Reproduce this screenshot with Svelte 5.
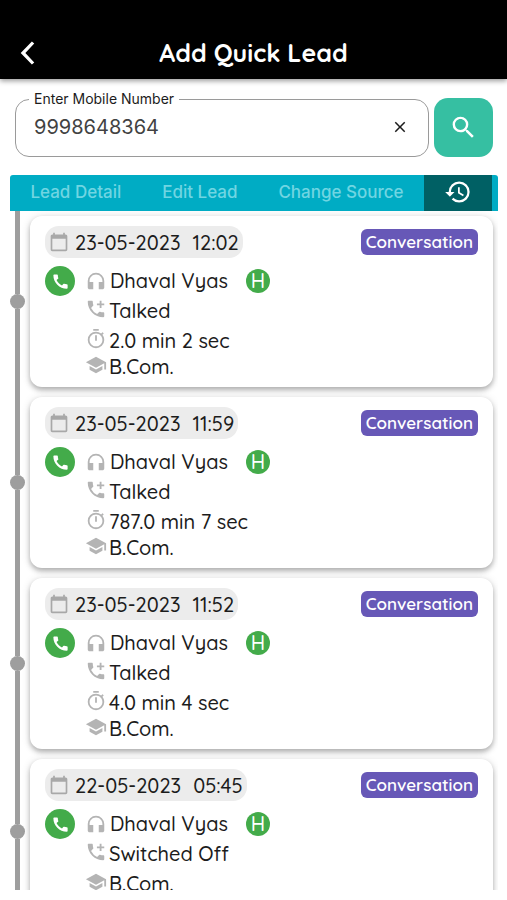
<script lang="ts">
	interface Activity {
		date: string;
		time: string;
		caller: string;
		status: string;
		duration?: string;
		course: string;
		tag: string;
	}

	const tabs = ['Lead Detail', 'Edit Lead', 'Change Source'];

	const activities: Activity[] = [
		{ date: '23-05-2023', time: '12:02', caller: 'Dhaval Vyas', status: 'Talked', duration: '2.0 min 2 sec', course: 'B.Com.', tag: 'Conversation' },
		{ date: '23-05-2023', time: '11:59', caller: 'Dhaval Vyas', status: 'Talked', duration: '787.0 min 7 sec', course: 'B.Com.', tag: 'Conversation' },
		{ date: '23-05-2023', time: '11:52', caller: 'Dhaval Vyas', status: 'Talked', duration: '4.0 min 4 sec', course: 'B.Com.', tag: 'Conversation' },
		{ date: '22-05-2023', time: '05:45', caller: 'Dhaval Vyas', status: 'Switched Off', course: 'B.Com.', tag: 'Conversation' }
	];

	// 24x24 icon outlines
	const icons = {
		search: 'M15.5 14h-.79l-.28-.27A6.47 6.47 0 0 0 16 9.5 6.5 6.5 0 1 0 9.5 16c1.61 0 3.09-.59 4.23-1.57l.27.28v.79l5 4.99L20.49 19l-4.99-5zm-6 0C7.01 14 5 11.99 5 9.5S7.01 5 9.5 5 14 7.01 14 9.5 11.99 14 9.5 14z',
		close: 'M19 6.41L17.59 5 12 10.59 6.41 5 5 6.41 10.59 12 5 17.59 6.41 19 12 13.41 17.59 19 19 17.59 13.41 12z',
		history: 'M13 3a9 9 0 0 0-9 9H1l3.89 3.89.07.14L9 12H6c0-3.87 3.13-7 7-7s7 3.13 7 7-3.13 7-7 7c-1.93 0-3.68-.79-4.94-2.06l-1.42 1.42A8.95 8.95 0 0 0 13 21a9 9 0 0 0 0-18zm-1 5v5l4.28 2.54.72-1.21-3.5-2.08V8H12z',
		calendar: 'M20 3h-1V1h-2v2H7V1H5v2H4c-1.1 0-2 .9-2 2v16c0 1.1.9 2 2 2h16c1.1 0 2-.9 2-2V5c0-1.1-.9-2-2-2zm0 18H4V8h16v13z',
		phone: 'M20.01 15.38c-1.23 0-2.42-.2-3.53-.56a.98.98 0 0 0-1.01.24l-1.57 1.97c-2.83-1.35-5.48-3.9-6.89-6.83l1.95-1.66c.27-.28.35-.67.24-1.02-.37-1.11-.56-2.3-.56-3.53 0-.54-.45-.99-.99-.99H4.19C3.65 3 3 3.24 3 3.99 3 13.28 10.73 21 20.01 21c.71 0 .99-.63.99-1.18v-3.45c0-.54-.45-.99-.99-.99z',
		headphones: 'M12 3a9 9 0 0 0-9 9v7c0 1.1.9 2 2 2h4v-8H5v-1c0-3.87 3.13-7 7-7s7 3.13 7 7v1h-4v8h4c1.1 0 2-.9 2-2v-7a9 9 0 0 0-9-9z',
		addCall: 'M20 15.5c-1.25 0-2.45-.2-3.57-.57-.1-.03-.21-.05-.31-.05-.26 0-.51.1-.71.29l-2.2 2.2a15.05 15.05 0 0 1-6.59-6.59l2.2-2.2c.28-.28.36-.67.25-1.02C8.7 6.45 8.5 5.25 8.5 4c0-.55-.45-1-1-1H4c-.55 0-1 .45-1 1 0 9.39 7.61 17 17 17 .55 0 1-.45 1-1v-3.5c0-.55-.45-1-1-1zM21 6h-3V3h-2v3h-3v2h3v3h2V8h3z',
		timer: 'M15 1H9v2h6V1zm-4 13h2V8h-2v6zm8.03-6.61l1.42-1.42c-.43-.51-.9-.99-1.41-1.41l-1.42 1.42A8.96 8.96 0 0 0 12 4a9 9 0 1 0 9 9c0-2.12-.74-4.07-1.97-5.61zM12 20c-3.87 0-7-3.13-7-7s3.13-7 7-7 7 3.13 7 7-3.13 7-7 7z',
		school: 'M5 13.18v4L12 21l7-3.82v-4L12 17l-7-3.82zM12 3L1 9l11 6 9-4.91V17h2V9L12 3z'
	};

	let mobile = $state('9998648364');
	let active = $state('History');
</script>

{#snippet icon(name: keyof typeof icons, cls: string)}
	<svg class={cls} viewBox="0 0 24 24" fill="currentColor" aria-hidden="true"><path d={icons[name]} /></svg>
{/snippet}

<div class="page">
	<header>
		<button class="back" aria-label="Back">
			<svg viewBox="0 0 24 24" fill="currentColor"><path d="M12.2 3.9L10.2 2.1 .6 12l9.6 9.9 2-1.8L4.6 12z" /></svg>
		</button>
		<h1>Add Quick Lead</h1>
	</header>

	<form class="lookup" onsubmit={(e) => e.preventDefault()}>
		<fieldset>
			<legend><label for="mobile">Enter Mobile Number</label></legend>
			<div class="field">
				<input id="mobile" type="tel" bind:value={mobile} />
				<button class="clear" type="button" aria-label="Clear" onclick={() => (mobile = '')}>
					{@render icon('close', 'ic-close')}
				</button>
			</div>
		</fieldset>
		<button class="search" aria-label="Search">{@render icon('search', 'ic-search')}</button>
	</form>

	<nav class="tabs">
		{#each tabs as tab}
			<button class="tab" class:active={active === tab} onclick={() => (active = tab)}>{tab}</button>
		{/each}
		<button class="tab history" class:active={active === 'History'} aria-label="History" onclick={() => (active = 'History')}>
			{@render icon('history', 'ic-history')}
		</button>
	</nav>

	<main>
		{#each activities as item}
			<section class="entry">
				<div class="rail">
					<span class="line"></span>
					<span class="dot"></span>
					<span class="line"></span>
				</div>

				<article class="card">
					<div class="card-head">
						<div class="stamp">
							{@render icon('calendar', 'ic-calendar')}
							<span>{item.date}</span>
							<span class="time">{item.time}</span>
						</div>
						<span class="tag">{item.tag}</span>
					</div>

					<div class="card-body">
						<span class="call">{@render icon('phone', 'ic-phone')}</span>
						<div class="details">
							<div class="row name">
								{@render icon('headphones', 'ic-row')}
								<span>{item.caller}</span>
								<span class="grade">H</span>
							</div>
							<div class="row status">
								{@render icon('addCall', 'ic-row')}
								<span>{item.status}</span>
							</div>
							{#if item.duration}
								<div class="row">
									{@render icon('timer', 'ic-row')}
									<span>{item.duration}</span>
								</div>
							{/if}
							<div class="row">
								{@render icon('school', 'ic-row')}
								<span>{item.course}</span>
							</div>
						</div>
					</div>
				</article>
			</section>
		{/each}
	</main>
</div>

<style>
	:global(body) {
		background: #fff;
	}

	.page {
		display: flex;
		flex-direction: column;
		height: 100vh;
		box-sizing: border-box;
		padding-bottom: 10px;
		font-family: Quicksand, Inter, sans-serif;
		font-weight: 500;
		color: #1c1c1c;
	}

	button {
		display: flex;
		align-items: center;
		justify-content: center;
		padding: 0;
		border: 0;
		background: none;
		color: inherit;
		font: inherit;
		cursor: pointer;
	}

	svg {
		display: block;
		flex: none;
	}

	/* Header */
	header {
		display: grid;
		grid-template-columns: 1fr auto 1fr;
		align-items: center;
		height: 52px;
		padding: 27px 20px 0;
		background: #000;
		color: #fff;
		box-shadow: 0 2px 5px rgba(0, 0, 0, 0.4);
	}

	.back {
		justify-self: start;
	}

	.back svg {
		width: 28px;
		height: 28px;
	}

	h1 {
		margin: 0;
		font-size: 25px;
		font-weight: 700;
		line-height: 32px;
	}

	/* Number lookup */
	.lookup {
		display: flex;
		align-items: flex-end;
		gap: 5px;
		padding: 11px 14px 18px 15px;
	}

	fieldset {
		flex: 1;
		min-width: 0;
		margin: 0;
		padding: 0 19px 10px 13px;
		border: 1px solid #9a9a9a;
		border-radius: 14px;
	}

	legend {
		padding: 0 5px;
		font-family: Inter, sans-serif;
		font-size: 14px;
		font-weight: 400;
		line-height: 18px;
	}

	.field {
		display: flex;
		align-items: center;
		height: 38px;
		padding-left: 5px;
	}

	input {
		flex: 1;
		min-width: 0;
		padding: 0;
		border: 0;
		outline: 0;
		background: none;
		color: #424242;
		font-family: Inter, sans-serif;
		font-size: 20px;
	}

	.ic-close {
		width: 18px;
		height: 18px;
	}

	.search {
		width: 59px;
		height: 59px;
		border-radius: 14px;
		background: #36bfa2;
		color: #fff;
	}

	.ic-search {
		width: 29px;
		height: 29px;
	}

	/* Tabs */
	.tabs {
		display: flex;
		height: 36px;
		margin: 0 9px 0 10px;
		padding-right: 6px;
		border-radius: 3px 3px 0 0;
		background: #00acc4;
	}

	.tab {
		flex: 1 1 auto;
		padding-bottom: 3px;
		color: #70d5e2;
		font-family: Inter, sans-serif;
		font-size: 17px;
		font-weight: 500;
	}

	.tab.history {
		flex: 0 0 68px;
	}

	.tab.active {
		background: #006064;
		color: #fff;
	}

	.ic-history {
		width: 28px;
		height: 28px;
	}

	/* Timeline */
	main {
		flex: 1;
		min-height: 0;
		margin: 0 9px 0 10px;
		padding-right: 5px;
		overflow-y: auto;
		scrollbar-width: none;
	}

	.entry {
		display: flex;
		gap: 5px;
	}

	.rail {
		display: flex;
		flex-direction: column;
		align-items: center;
		width: 15px;
	}

	.line {
		flex: 1;
		width: 5px;
		background: #9e9e9e;
	}

	.dot {
		width: 15px;
		height: 15px;
		border-radius: 50%;
		background: #9e9e9e;
	}

	.card {
		flex: 1;
		min-width: 0;
		margin: 5px 0;
		padding: 10px 15px 7px;
		border-radius: 12px;
		background: #fff;
		box-shadow: 0 3px 5px rgba(0, 0, 0, 0.26), 0 1px 10px rgba(0, 0, 0, 0.12);
	}

	.card-head {
		display: flex;
		align-items: center;
		justify-content: space-between;
	}

	.stamp {
		display: flex;
		align-items: center;
		gap: 6px;
		height: 32px;
		padding: 0 4px;
		border-radius: 14px;
		background: #ececec;
		font-size: 20px;
	}

	.time {
		margin-left: 6px;
	}

	.ic-calendar {
		width: 20px;
		height: 20px;
		color: #a8a8a8;
	}

	.tag {
		padding: 0 5px;
		border-radius: 6px;
		background: #6758b7;
		color: #fff;
		font-size: 17px;
		font-weight: 600;
		line-height: 26px;
	}

	.card-body {
		display: flex;
		gap: 10px;
		margin-top: 8px;
	}

	.call {
		display: flex;
		align-items: center;
		justify-content: center;
		width: 30px;
		height: 30px;
		border-radius: 50%;
		background: #43ab4a;
		color: #fff;
	}

	.ic-phone {
		width: 19px;
		height: 19px;
	}

	.row {
		display: flex;
		gap: 2px;
		font-size: 20px;
		line-height: 26px;
	}

	.row.name {
		align-items: center;
		gap: 3px;
		height: 30px;
		margin-bottom: 2px;
	}

	.row.status {
		margin-bottom: 4px;
	}

	.ic-row {
		width: 22px;
		height: 22px;
		color: #b4b4b4;
	}

	.grade {
		width: 24px;
		height: 24px;
		margin-left: 15px;
		border-radius: 50%;
		background: #43ab4a;
		color: #fff;
		line-height: 24px;
		text-align: center;
	}
</style>
